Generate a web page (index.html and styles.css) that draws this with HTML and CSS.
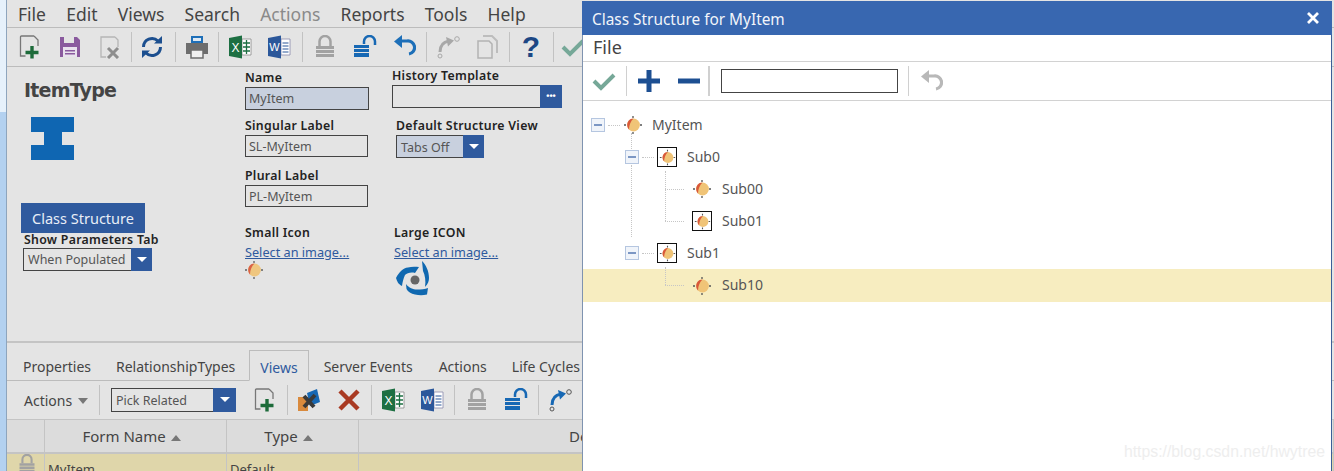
FILE: index.html
```html
<!DOCTYPE html>
<html lang="en">
<head>
<meta charset="utf-8">
<title>Class Structure for MyItem</title>
<link rel="stylesheet" href="styles.css">
</head>
<body>
<svg class="defs" width="0" height="0" aria-hidden="true">
  <symbol id="i-new" viewBox="0 0 24 24"><path d="M16 1H3.500a1 1 0 0 0-1 1v19h5M16 1l4 4v6" fill="none" stroke="#777" stroke-width="1.300"/><path d="M14 11v12.500M7.500 17.500h13" stroke="#1d6b3a" stroke-width="3.400"/></symbol>
  <symbol id="i-save" viewBox="0 0 24 24"><path d="M2 2h17l3 3v17H2z" fill="#8a5a9e"/><path d="M6 2h10v6H6z" fill="#e4e4e4"/><path d="M5 12h14v10H5z" fill="#e9e2ee"/><path d="M7 15h10v1.500H7zM7 18h10v1.500H7z" fill="#8a5a9e"/></symbol>
  <symbol id="i-del" viewBox="0 0 24 24"><path d="M17 2H3v20h5M17 2l3 3v7" fill="none" stroke="#b5b5b5" stroke-width="1.300"/><path d="M10 13l10 10M20 13L10 23" stroke="#8e8e8e" stroke-width="3"/></symbol>
  <symbol id="i-refresh" viewBox="0 0 24 24"><path d="M3.500 12a8.500 8.500 0 0 1 14.500-6" fill="none" stroke="#1c4f8f" stroke-width="3"/><path d="M20.500 12a8.500 8.500 0 0 1-14.500 6" fill="none" stroke="#1c4f8f" stroke-width="3"/><path d="M14 8.500h8V1zM10 15.500H2V23z" fill="#1c4f8f"/></symbol>
  <symbol id="i-print" viewBox="0 0 24 24"><path d="M6 1h12v7H6z" fill="#1e6fb8"/><path d="M8 3h8v3H8z" fill="#dfe9f3"/><path d="M1 8h22v11H1z" fill="#6d6d6d"/><path d="M6 15h12v8H6z" fill="#f0f0f0" stroke="#6d6d6d" stroke-width="1.500"/></symbol>
  <symbol id="i-excel" viewBox="0 0 24 24"><path d="M14 4h9v16h-9z" fill="#fff" stroke="#888" stroke-width=".8"/><path d="M15 8h7M15 12h7M15 16h7M18.500 5v14" stroke="#1d6f42" stroke-width="1.300"/><path d="M1 3l13-2.500v23L1 21z" fill="#1d6f42"/><text x="7.500" y="17" text-anchor="middle" font-family="Liberation Sans, sans-serif" font-size="12" fill="#fff">X</text></symbol>
  <symbol id="i-word" viewBox="0 0 24 24"><path d="M14 4h9v16h-9z" fill="#fff" stroke="#88a" stroke-width=".8"/><path d="M15.500 8h6M15.500 11h6M15.500 14h6M15.500 17h6" stroke="#2b579a" stroke-width="1.200"/><path d="M1 3l13-2.500v23L1 21z" fill="#2b579a"/><text x="7.500" y="16" text-anchor="middle" font-family="Liberation Sans, sans-serif" font-size="11" fill="#fff">W</text></symbol>
  <symbol id="i-lock" viewBox="0 0 24 24"><path d="M6.500 11V6.500a5.500 5.500 0 0 1 11 0V11" fill="none" stroke="#a2a2a2" stroke-width="2.500"/><path d="M3 11h18v3H3zM3 15h18v3H3zM3 19h18v3H3z" fill="#a2a2a2"/></symbol>
  <symbol id="i-unlock" viewBox="0 0 24 24"><path d="M11 9V6.500a5.500 5.500 0 0 1 11 0V10" fill="none" stroke="#1768b4" stroke-width="2.500"/><path d="M1 10h15v3H1zM1 14h15v3H1zM1 18h15v4H1z" fill="#1768b4"/></symbol>
  <symbol id="i-undo" viewBox="0 0 24 24"><path d="M9 6h6a6.500 6.500 0 0 1 2 13" fill="none" stroke="#1d6fb8" stroke-width="3.200"/><path d="M10 0L2 6.500 10 13z" fill="#1d6fb8"/></symbol>
  <symbol id="i-undo-g" viewBox="0 0 24 24"><path d="M9 7h6a6.500 6.500 0 0 1 2 13" fill="none" stroke="#b8b8b8" stroke-width="3.200"/><path d="M10 1L2 7.500 10 14z" fill="#b8b8b8"/></symbol>
  <symbol id="i-redo-g" viewBox="0 0 24 24"><path d="M4 17c0-7 3-10 9-11" fill="none" stroke="#a8a8a8" stroke-width="3"/><path d="M10 2l8 3.500-6 6z" fill="#a8a8a8"/><circle cx="4" cy="21" r="2" fill="none" stroke="#a8a8a8"/><circle cx="21" cy="4" r="2.300" fill="none" stroke="#a8a8a8"/></symbol>
  <symbol id="i-redo" viewBox="0 0 24 24"><path d="M4 17c0-7 3-10 9-11" fill="none" stroke="#1768b4" stroke-width="3"/><path d="M10 2l8 3.500-6 6z" fill="#1768b4"/><circle cx="4" cy="21" r="2" fill="none" stroke="#555"/><circle cx="21" cy="4" r="2.300" fill="none" stroke="#555"/></symbol>
  <symbol id="i-copy" viewBox="0 0 24 24"><path d="M8 1h9l5 5v12" fill="none" stroke="#bdbdbd" stroke-width="2"/><path d="M3 6h11l3 3v14H3z" fill="#e4e4e4" stroke="#b2b2b2" stroke-width="1.500"/></symbol>
  <symbol id="i-check" viewBox="0 0 24 24"><path d="M2 12l7 7L22 6" fill="none" stroke="#76a898" stroke-width="4"/></symbol>
  <symbol id="i-relate" viewBox="0 0 24 24"><path d="M1 9h10v14H1z" fill="#d98a3d"/><path d="M10 5l10-4 3 13-10 4z" fill="#1768b4"/><path d="M7 8l10 11M18 7L7 19" stroke="#3a3a3a" stroke-width="4"/></symbol>
  <symbol id="i-x" viewBox="0 0 24 24"><path d="M3 3l18 18M21 3L3 21" stroke="#a93a22" stroke-width="4.500"/></symbol>
  <symbol id="i-item" viewBox="0 0 20 20"><path d="M10 1v2M10 17v2M1 10h2M17 10h2" stroke="#555" stroke-width="1.300"/><circle cx="10.500" cy="10" r="6.400" fill="#f0c477"/><path d="M10.500 3.500C6.500 3.500 3.800 7 4.300 11 4.500 12.500 5.200 13.800 6 14.500 6.200 10 7.500 6.500 10.500 3.500z" fill="#d9583a"/></symbol>
  <symbol id="i-logo" viewBox="0 0 36 36"><path d="M1 17C4 11 8 7 13 6.500 16 5.500 20 5.500 24 6L20 12C16 11 12 12 10 14 8.500 17 7.500 21 7 25 3 23 2 20 1 17z" fill="#0f68b0"/><path d="M27 0C31 4 34 10 34 17 34 20 33 23 30 26 31 20 30 14 28 10z" fill="#0f68b0"/><path d="M11 23C14 27 18 28.500 22 28.500 26 28.500 30 28 33 27L32 33.500C28 34.500 24 34.500 20 33.500 16 32.500 13 31 11.500 28z" fill="#0f68b0"/><circle cx="20" cy="19" r="4.500" fill="#666"/></symbol>
</svg>

<div class="page">
  <div class="edge"></div>
  <main class="app">
    <nav class="menubar">
      <span>File</span><span>Edit</span><span>Views</span><span>Search</span><span class="off">Actions</span><span>Reports</span><span>Tools</span><span>Help</span>
    </nav>
    <div class="toolbar toolbar-top">
      <svg class="ic"><use href="#i-new"/></svg>
      <svg class="ic"><use href="#i-save"/></svg>
      <svg class="ic"><use href="#i-del"/></svg>
      <i class="sep"></i>
      <svg class="ic"><use href="#i-refresh"/></svg>
      <i class="sep"></i>
      <svg class="ic"><use href="#i-print"/></svg>
      <i class="sep"></i>
      <svg class="ic"><use href="#i-excel"/></svg>
      <svg class="ic"><use href="#i-word"/></svg>
      <i class="sep"></i>
      <svg class="ic"><use href="#i-lock"/></svg>
      <svg class="ic"><use href="#i-unlock"/></svg>
      <svg class="ic"><use href="#i-undo"/></svg>
      <i class="sep"></i>
      <svg class="ic"><use href="#i-redo-g"/></svg>
      <svg class="ic"><use href="#i-copy"/></svg>
      <i class="sep"></i>
      <span class="help">?</span>
      <i class="sep"></i>
      <svg class="ic"><use href="#i-check"/></svg>
    </div>

    <section class="form">
      <div class="col col-a">
        <h1 class="title">ItemType</h1>
        <div class="itype"><b></b><b></b><b></b></div>
        <button class="primary">Class Structure</button>
        <label class="lbl lbl-tight">Show Parameters Tab</label>
        <div class="select select-param"><span>When Populated</span><em></em></div>
      </div>
      <div class="col col-b">
        <label class="lbl">Name</label>
        <div class="input input-req">MyItem</div>
        <label class="lbl">Singular Label</label>
        <div class="input">SL-MyItem</div>
        <label class="lbl lbl-c">Plural Label</label>
        <div class="input">PL-MyItem</div>
        <label class="lbl lbl-icon">Small Icon</label>
        <a class="link">Select an image...</a>
        <svg class="small-icon"><use href="#i-item"/></svg>
      </div>
      <div class="col col-c">
        <label class="lbl">History Template</label>
        <div class="picker"><div></div><button>&#8226;&#8226;&#8226;</button></div>
        <label class="lbl lbl-dsv">Default Structure View</label>
        <div class="select select-view"><span>Tabs Off</span><em></em></div>
        <label class="lbl lbl-large">Large ICON</label>
        <a class="link">Select an image...</a>
        <svg class="large-icon"><use href="#i-logo"/></svg>
      </div>
    </section>

    <div class="tabs">
      <span>Properties</span><span>RelationshipTypes</span><span class="on">Views</span><span>Server Events</span><span>Actions</span><span>Life Cycles</span>
    </div>
    <div class="toolbar toolbar-rel">
      <div class="actions">Actions <em></em></div>
      <i class="sep"></i>
      <div class="select select-rel"><span>Pick Related</span><em></em></div>
      <svg class="ic"><use href="#i-new"/></svg>
      <i class="sep"></i>
      <svg class="ic"><use href="#i-relate"/></svg>
      <svg class="ic"><use href="#i-x"/></svg>
      <i class="sep"></i>
      <svg class="ic"><use href="#i-excel"/></svg>
      <svg class="ic"><use href="#i-word"/></svg>
      <i class="sep"></i>
      <svg class="ic"><use href="#i-lock"/></svg>
      <svg class="ic"><use href="#i-unlock"/></svg>
      <i class="sep"></i>
      <svg class="ic"><use href="#i-redo"/></svg>
    </div>
    <div class="grid-row grid-head">
      <div></div>
      <div class="th">Form Name <em></em></div>
      <div class="th">Type <em></em></div>
      <div class="th th-d">Description</div>
    </div>
    <div class="grid-row grid-body">
      <div class="cell-lock"><svg class="ic"><use href="#i-lock"/></svg></div>
      <div class="cell">MyItem</div>
      <div class="cell">Default</div>
      <div></div>
    </div>
  </main>
</div>

<aside class="dialog">
  <header class="dlg-title"><span>Class Structure for MyItem</span><svg class="close" viewBox="0 0 14 14"><path d="M2 2l10 10M12 2L2 12" stroke="#fff" stroke-width="2.800"/></svg></header>
  <nav class="dlg-menu">File</nav>
  <div class="dlg-tools">
    <svg class="ic"><use href="#i-check"/></svg>
    <i class="sep"></i>
    <svg class="pm" viewBox="0 0 22 22"><path d="M0 11h22M11 0v22" stroke="#1d4f92" stroke-width="5"/></svg>
    <svg class="pm" viewBox="0 0 22 22"><path d="M0 11h22" stroke="#1d4f92" stroke-width="5"/></svg>
    <i class="sep sep-w"></i>
    <div class="dlg-input"></div>
    <i class="sep"></i>
    <svg class="ic"><use href="#i-undo-g"/></svg>
  </div>
  <ul class="tree">
    <li class="node lvl0"><i class="exp"></i><i class="dash"></i><svg class="nico"><use href="#i-item"/></svg><span>MyItem</span></li>
    <li class="node lvl1 v-up"><i class="exp"></i><i class="dash"></i><span class="framed"><svg class="nico"><use href="#i-item"/></svg></span><span>Sub0</span></li>
    <li class="node lvl2 l-first"><i class="dash"></i><svg class="nico"><use href="#i-item"/></svg><span>Sub00</span></li>
    <li class="node lvl2 l-next"><i class="dash"></i><span class="framed"><svg class="nico"><use href="#i-item"/></svg></span><span>Sub01</span></li>
    <li class="node lvl1 v-long"><i class="exp"></i><i class="dash"></i><span class="framed"><svg class="nico"><use href="#i-item"/></svg></span><span>Sub1</span></li>
    <li class="node lvl2 l-first selected"><i class="dash"></i><svg class="nico"><use href="#i-item"/></svg><span>Sub10</span></li>
  </ul>
  <div class="watermark">https://blog.csdn.net/hwytree</div>
</aside>
</body>
</html>
```

FILE: styles.css
```css
* { box-sizing: border-box; }
html, body { margin: 0; height: 471px; overflow: hidden; }
body { position: relative; font-family: "Noto Sans", "Open Sans", sans-serif; color: #444; background: #e4e4e4; }
.defs { position: absolute; }
em { font-style: normal; }
h1 { margin: 0; }
ul { list-style: none; margin: 0; padding: 0; }

.page { display: flex; width: 1334px; height: 471px; overflow: hidden; }
.edge { flex: 0 0 7px; border-right: 1px solid #8ea5bd; background: linear-gradient(#e6f1fb 0 112px, #b3d1f0 112px); }
.app { flex: 1; min-width: 0; display: flex; flex-direction: column; }
.app > * { flex: none; }

.menubar { height: 28px; display: flex; align-items: center; padding-left: 11px; gap: 20.200px; font-size: 17.500px; color: #444; border-bottom: 1px solid #bcbcbc; }
.menubar .off { color: #8a8a8a; }

.toolbar { display: grid; align-items: center; justify-items: center; }
.toolbar-top { height: 39px; padding-left: 3px; border-bottom: 1px solid #bcbcbc;
  grid-template-columns: 40px 40px 40px 2px 40px 6px 38px 4px 40px 38px 8px 38px 42px 36px 8px 36px 42px 2px 42px 2px 38px; }
.ic { width: 24px; height: 24px; display: block; }
.sep { display: block; width: 1px; height: 30px; background: #c2c2c2; }
.help { font: bold 30px/32px "Liberation Sans", sans-serif; color: #1c4784; }

.form { height: 276px; display: flex; padding-left: 17px; border-bottom: 2px solid #c4c4c4; }
.col { display: flex; flex-direction: column; align-items: flex-start; }
.col-a { width: 221px; }
.col-b { width: 147px; }
.col-c { width: 190px; }

.title { margin-top: 11px; font: bold 19px/24px "DejaVu Sans", sans-serif; letter-spacing: -.8px; color: #444; }
.itype { margin: 15px 0 0 7px; width: 43px; height: 43px; display: flex; flex-direction: column; align-items: center; }
.itype b { width: 43px; height: 15px; background: #0f66b2; }
.itype b:nth-child(2) { width: 18px; height: 13px; }
.primary { margin: 43px 0 0 -3px; width: 124px; height: 30px; border: 0; background: #2f5a9e; color: #e8eef7; font: 14.500px "Noto Sans", sans-serif; padding: 0; }
.lbl { display: block; height: 14px; padding-top: 1px; font: 600 12.300px/14px "Noto Sans", sans-serif; color: #222; letter-spacing: .3px; white-space: nowrap; }
.lbl-tight { margin-top: -1px; }

.col-b .lbl:first-child { margin-top: 3px; }
.col-c .lbl:first-child { margin-top: 1px; }
.input { margin: 3px 0 8px; width: 123px; height: 22px; border: 1px solid #444; padding-left: 3px; font-size: 12.500px; line-height: 22px; color: #555; }
.input-req { width: 124px; height: 23px; background: #c8d0de; line-height: 21px; }
.lbl-c { margin-top: 3px; }
.lbl-icon { margin-top: 10px; }
.link { margin-top: 6px; font-size: 12.700px; line-height: 14px; color: #2f5a9e; text-decoration: underline; }
.small-icon { margin-top: 1px; width: 20px; height: 20px; margin-left: -1px; opacity: .92; }

.picker { display: flex; margin: 3px 0 10px; width: 170px; height: 23px; }
.picker div { flex: 1; border: 1px solid #444; border-right: 0; }
.picker button { width: 22px; border: 0; padding: 0; background: #2f5a9e; color: #fff; font: bold 9px/23px "Liberation Sans", sans-serif; letter-spacing: 0; }
.lbl-dsv { margin-left: 4px; }
.select { display: flex; align-items: stretch; height: 23px; border: 1px solid #444; font-size: 12.500px; color: #555; }
.select span { flex: 1; padding-left: 4px; line-height: 21px; white-space: nowrap; overflow: hidden; }
.select em { flex: 0 0 21px; margin: -1px -1px -1px 0; background: #2f5a9e; position: relative; }
.select em::after, .actions em, .th em { content: ""; }
.select em::after { position: absolute; left: 6px; top: 9px; border: 5px solid transparent; border-top: 5px solid #fff; border-bottom: 0; }
.select-param { margin: 2px 0 0 -1px; width: 129px; }
.select-view { margin: 3px 0 0 4px; width: 88px; background: #c8d0de; }
.select-view span, .select-rel span { line-height: 23px; }
.select-rel { width: 125px; height: 24px; }
.select-rel em { flex-basis: 23px; }
.select-rel em::after { left: 7px; }
.lbl-large { margin: 67px 0 0 2px; }
.col-c .link { margin-left: 2px; }
.large-icon { margin: 2px 0 0 3px; width: 36px; height: 36px; }

.tabs { height: 38px; display: flex; align-items: flex-end; padding-left: 16px; font-size: 14px; color: #444; border-bottom: 1px solid #bcbcbc; }
.tabs span { height: 31px; line-height: 35px; padding: 0 14.500px 0 0; }
.tabs span:nth-child(1) { padding-right: 25px; }
.tabs span:nth-child(2) { padding-right: 14px; }
.tabs .on { margin-bottom: -1px; height: 31px; line-height: 33px; padding: 0 10px; border: 1px solid #bcbcbc; border-bottom-color: #e4e4e4; color: #2f5a9e; margin-right: 15px; }
.tabs span:nth-child(4) { padding-right: 26px; }
.tabs span:nth-child(5) { padding-right: 25px; }
.tabs span:nth-child(6) { white-space: nowrap; }

.toolbar-rel { height: 39px; padding-left: 17px; border-bottom: 1px solid #c4c4c4;
  grid-template-columns: 72px 6px 143px 40px 4px 40px 40px 4px 40px 38px 6px 40px 38px 6px 38px; }
.actions { justify-self: start; font-size: 14px; }
.actions em { display: inline-block; margin: 0 0 2px 2px; border: 5px solid transparent; border-top: 6px solid #777; border-bottom: 0; }

.grid-row { display: grid; grid-template-columns: 38px 182px 132px 1fr; }
.grid-head { height: 34px; background: #dcdcdc; border-bottom: 2px solid #c4c4c4; font-size: 15px; }
.grid-head > div { border-right: 1px solid #c4c4c4; }
.th { padding-right: 8px; line-height: 32px; text-align: center; white-space: nowrap; overflow: hidden; }
.th em { display: inline-block; margin: 0 0 1px 1px; border: 5px solid transparent; border-bottom: 6px solid #777; border-top: 0; }
.th-d { text-align: left; padding-left: 210px; }
.grid-body { height: 30px; background: #dfd6aa; font-size: 13px; }
.grid-body > div { border-right: 1px solid #c4c4c4; }
.cell { padding: 6px 0 0 3px; }
.cell-lock { padding: 0 0 0 10px; }
.cell-lock .ic { width: 20px; height: 20px; }

.dialog { position: absolute; left: 582px; top: 1px; width: 750px; height: 470px; background: #fff; border-left: 1px solid #7f93b0; border-right: 1px solid #3b5f98; display: flex; flex-direction: column; }
.dlg-title { height: 34px; background: #3867b0; color: #f2f5fa; display: flex; align-items: center; justify-content: space-between; padding: 2px 10px 0; font-size: 15.400px; margin-left: -1px; margin-right: -1px; }
.close { width: 14px; height: 14px; margin-right: 2px; margin-top: -2px; }
.dlg-menu { height: 27px; padding-left: 10px; font-size: 18px; line-height: 24px; color: #444; border-bottom: 1px solid #d2d2d2; }
.dlg-tools { height: 39px; display: grid; align-items: center; justify-items: center; border-bottom: 1px solid #d2d2d2;
  grid-template-columns: 42px 2px 44px 36px 4px 196px 2px 44px; }
.dlg-tools .sep { height: 30px; background: #d0d0d0; }
.dlg-tools .sep-w { width: 2px; }
.pm { width: 22px; height: 22px; }
.dlg-input { justify-self: start; margin-left: 10px; width: 177px; height: 24px; border: 1px solid #444; }

.tree { padding-top: 8px; flex: 1; font-size: 14px; color: #555; }
.node { position: relative; height: 32px; display: flex; align-items: center; }
.exp { position: relative; width: 14px; height: 14px; flex: none; border: 1px solid #b5c6e0; background: #f0f4fa; }
.exp::after { content: ""; position: absolute; left: 2px; right: 2px; top: 5px; height: 2px; background: #7c97c4; }
.dash { width: 12px; height: 0; flex: none; margin: 0 3px; border-top: 1px dotted #c6c6c6; }
.nico { width: 20px; height: 20px; flex: none; display: block; }
.framed { flex: none; width: 20px; height: 20px; border: 1px solid #111; display: flex; align-items: center; justify-content: center; }
.framed .nico { width: 17px; height: 17px; }
.node > span:last-child { margin-left: 9px; padding-bottom: 2px; }
.lvl0 { padding-left: 8px; }
.lvl1 { padding-left: 42px; }
.lvl1 > span:last-child { margin-left: 10px; }
.lvl2 { padding-left: 82px; }
.lvl2 .dash { width: 19px; margin: 0 8px 0 0; }
.lvl2 > span:last-child { margin-left: 10px; }
.v-up::before, .l-first::before, .l-next::before { content: ""; position: absolute; border-left: 1px dotted #c6c6c6; }
.v-up::before { left: 48px; top: -8px; height: 16px; }
.v-up::after { content: ""; position: absolute; left: 48px; top: 24px; height: 72px; border-left: 1px dotted #c6c6c6; }
.l-first::before { left: 82px; top: -2px; height: 18px; }
.l-next::before { left: 82px; top: -16px; height: 32px; }
.selected { background: #f7edc0; height: 33px; }

.watermark { position: absolute; right: 6px; bottom: 10px; font: 15.800px "Liberation Sans", sans-serif; color: #eeeeee; }
```
